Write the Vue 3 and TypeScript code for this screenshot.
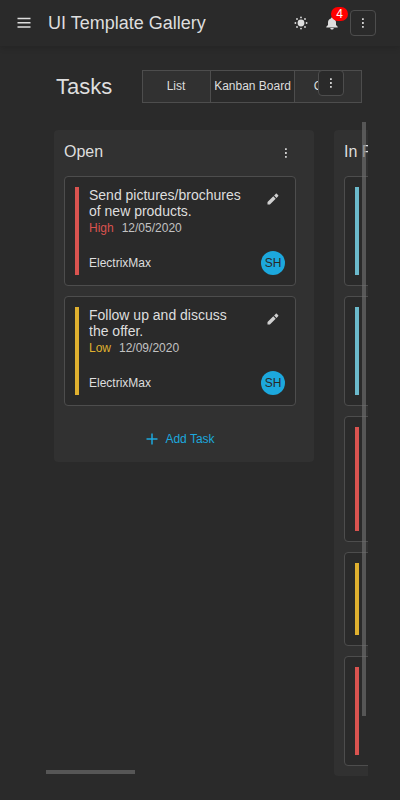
<script setup lang="ts">
interface Task {
  title: string
  priority: string
  date: string
  company: string
  initials: string
  height: number
}

interface Column {
  name: string
  tasks: Task[]
  canAdd: boolean
}

const tabs: string[] = ['List', 'Kanban Board', 'Gantt']
const activeTab = 'Kanban Board'

const blank = (priority: string, height: number): Task => ({
  title: '', priority, date: '', company: '', initials: '', height,
})

const columns: Column[] = [
  {
    name: 'Open',
    canAdd: true,
    tasks: [
      { title: 'Send pictures/brochures of new products.', priority: 'High', date: '12/05/2020', company: 'ElectrixMax', initials: 'SH', height: 110 },
      { title: 'Follow up and discuss the offer.', priority: 'Low', date: '12/09/2020', company: 'ElectrixMax', initials: 'SH', height: 110 },
    ],
  },
  {
    name: 'In Progress',
    canAdd: false,
    tasks: [blank('Normal', 110), blank('Normal', 110), blank('High', 126), blank('Low', 94), blank('High', 110)],
  },
]
</script>

<template>
  <div class="app">
    <header class="header">
      <button class="menu" aria-label="Menu">
        <svg width="14" height="12" viewBox="0 0 14 12"><path d="M.5 1.5h13M.5 5.700h13M.5 10h13" /></svg>
      </button>
      <div class="brand">UI Template Gallery</div>
      <button class="icon-button theme" aria-label="Theme">
        <svg width="14" height="14" viewBox="0 0 14 14">
          <circle cx="7" cy="7" r="3.4" />
          <g>
            <circle cx="7" cy="1.400" r=".9" /><circle cx="7" cy="12.600" r=".9" />
            <circle cx="1.400" cy="7" r=".9" /><circle cx="12.600" cy="7" r=".9" />
            <circle cx="3" cy="3" r=".9" /><circle cx="11" cy="3" r=".9" />
            <circle cx="3" cy="11" r=".9" /><circle cx="11" cy="11" r=".9" />
          </g>
        </svg>
      </button>
      <button class="icon-button bell" aria-label="Notifications">
        <svg width="12" height="13" viewBox="0 0 12 13">
          <path d="M6 .5c.7 0 1 .4 1 1C8.900 2 10 3.500 10 5.500V8l1.700 1.700v.8H.3v-.8L2 8V5.500C2 3.500 3.100 2 5 1.500c0-.6.3-1 1-1zM4.300 11h3.400c0 1-.7 1.600-1.700 1.600S4.300 12 4.300 11z" />
        </svg>
        <span class="badge">4</span>
      </button>
      <button class="more" aria-label="More">
        <svg class="dots" width="2" height="10" viewBox="0 0 2 10"><path d="M0 .2h1.800V2H0zM0 4.100h1.800v1.800H0zM0 8h1.800v1.800H0z" /></svg>
      </button>
    </header>

    <main class="page">
      <div class="toolbar">
        <h1>Tasks</h1>
        <div class="tabs">
          <div v-for="tab in tabs" :key="tab" class="tab" :class="{ active: tab === activeTab }">{{ tab }}</div>
          <button class="more overflow" aria-label="More">
            <svg class="dots" width="2" height="10" viewBox="0 0 2 10"><path d="M0 .2h1.800V2H0zM0 4.100h1.800v1.800H0zM0 8h1.800v1.800H0z" /></svg>
          </button>
        </div>
      </div>

      <div class="board">
        <section v-for="column in columns" :key="column.name" class="column">
          <div class="column-head">
            <h2>{{ column.name }}</h2>
            <svg class="dots" width="2" height="10" viewBox="0 0 2 10"><path d="M0 .2h1.800V2H0zM0 4.100h1.800v1.800H0zM0 8h1.800v1.800H0z" /></svg>
          </div>
          <article v-for="(task, i) in column.tasks" :key="i" class="card" :style="{ height: task.height + 'px' }">
            <div class="stripe" :class="task.priority.toLowerCase()"></div>
            <div v-if="task.title" class="content">
              <div class="top">
                <div class="title">{{ task.title }}</div>
                <svg class="pencil" width="12" height="12" viewBox="0 0 12 12">
                  <path d="M.5 9.100v2.400h2.400l5.800-5.800-2.400-2.400zM7.100 2.500l2.400 2.400 1.600-1.600c.4-.4.4-.8 0-1.200L9.900.9c-.4-.4-.8-.4-1.200 0z" />
                </svg>
              </div>
              <div class="meta">
                <span :class="'text-' + task.priority.toLowerCase()">{{ task.priority }}</span>
                <span>{{ task.date }}</span>
              </div>
              <div class="bottom">
                <span>{{ task.company }}</span>
                <span class="avatar">{{ task.initials }}</span>
              </div>
            </div>
          </article>
          <button v-if="column.canAdd" class="add">
            <svg width="12" height="12" viewBox="0 0 12 12"><path d="M6 .5v11M.5 6h11" /></svg>
            <span>Add Task</span>
          </button>
        </section>
        <div class="scroll-y"></div>
        <div class="scroll-x"></div>
      </div>
    </main>
  </div>
</template>

<style>
body {
  margin: 0;
  background: #2a2a2a;
}
</style>

<style scoped>
.app {
  width: 400px;
  height: 800px;
  overflow: hidden;
  background: #2a2a2a;
  color: #dedede;
  font: 12px/16px "Liberation Sans", Arial, sans-serif;
}
.app * {
  box-sizing: border-box;
}
button {
  display: flex;
  align-items: center;
  justify-content: center;
  padding: 0;
  border: 0;
  background: none;
  color: inherit;
  font: inherit;
}
svg {
  display: block;
  flex: none;
  fill: #dedede;
}
.dots {
  fill: #d0d0d0;
}
h1,
h2 {
  margin: 0;
  font-weight: 400;
}
.header {
  position: relative;
  display: flex;
  align-items: center;
  height: 46px;
  padding: 0 24px 0 16px;
  background: #2a2a2a;
  box-shadow: 0 2px 6px rgba(0, 0, 0, 0.14);
}
.menu {
  width: 16px;
  height: 16px;
}
.menu svg {
  fill: none;
  stroke: #dedede;
  stroke-width: 1.5;
}
.brand {
  flex: 1;
  margin-left: 16px;
  font-size: 18px;
  line-height: 24px;
}
.icon-button {
  width: 26px;
  height: 26px;
}
.theme {
  margin-right: 5px;
}
.bell {
  position: relative;
  margin-right: 5px;
}
.badge {
  position: absolute;
  left: 12px;
  top: -3px;
  width: 17px;
  height: 14px;
  border-radius: 7px;
  background: #f00;
  color: #fff;
  line-height: 14px;
  text-align: center;
}
.more {
  width: 26px;
  height: 26px;
  border: 1px solid #4d4d4d;
  border-radius: 4px;
  background: #2a2a2a;
}
.page {
  padding: 24px 32px 0 46px;
}
.toolbar {
  display: flex;
  align-items: center;
  justify-content: space-between;
  height: 33px;
  padding: 0 6px 0 10px;
}
h1 {
  font-size: 22px;
  line-height: 32px;
}
.tabs {
  position: relative;
  display: flex;
  width: 220px;
  height: 33px;
  border: 1px solid #4d4d4d;
}
.tab {
  flex: 0 0 67px;
  padding-right: 1px;
  line-height: 31px;
  text-align: center;
  background: #313131;
}
.tab:last-of-type {
  flex: 1;
  padding: 0 0 0 1px;
}
.tab.active {
  flex: 0 0 85px;
  padding: 0;
  border: solid #4d4d4d;
  border-width: 0 1px;
  background: #2a2a2a;
  white-space: nowrap;
}
.overflow {
  position: absolute;
  right: 17px;
  top: -1px;
}
.board {
  position: relative;
  display: flex;
  align-items: flex-start;
  gap: 20px;
  height: 654px;
  margin-top: 19px;
  padding: 8px 0 0 8px;
  overflow: hidden;
}
.column {
  display: flex;
  flex: 0 0 260px;
  flex-direction: column;
  gap: 10px;
  padding: 0 18px 10px 10px;
  border-radius: 4px;
  background: #313131;
}
.column-head {
  display: flex;
  align-items: center;
  justify-content: space-between;
  height: 36px;
  padding: 9px 9px 0 0;
}
h2 {
  margin-top: -1px;
  font-size: 16px;
  line-height: 20px;
}
.card {
  display: flex;
  flex: none;
  gap: 10px;
  padding: 10px;
  border: 1px solid #4d4d4d;
  border-radius: 4px;
  background: #2a2a2a;
}
.stripe {
  width: 4px;
}
.high {
  background: #d9534f;
}
.low {
  background: #dfb02f;
}
.normal {
  background: #6bb9cb;
}
.text-high {
  color: #d9534f;
}
.text-low {
  color: #dfb02f;
}
.content {
  display: flex;
  flex: 1;
  flex-direction: column;
}
.top {
  display: flex;
  justify-content: space-between;
}
.title {
  width: 160px;
  font-size: 14px;
  line-height: 16px;
}
.pencil {
  margin: 6px 6px 0 0;
  fill: #d0d0d0;
}
.meta {
  display: flex;
  gap: 8px;
  margin-top: 1px;
  line-height: 17px;
  color: #c2c2c2;
}
.bottom {
  display: flex;
  align-items: center;
  justify-content: space-between;
  margin-top: auto;
}
.avatar {
  width: 24px;
  height: 24px;
  border-radius: 50%;
  background: #1ca8dd;
  color: #2a2a2a;
  line-height: 24px;
  text-align: center;
}
.add {
  gap: 7px;
  height: 36px;
  margin: 5px 0 -5px;
  padding-left: 1px;
  color: #1ca8dd;
}
.add svg {
  fill: none;
  stroke: #1ca8dd;
  stroke-width: 1.5;
}
.scroll-y,
.scroll-x {
  position: absolute;
  background: rgba(110, 110, 110, 0.65);
}
.scroll-y {
  right: 2px;
  top: 0;
  width: 4px;
  height: 594px;
}
.scroll-x {
  left: 0;
  bottom: 2px;
  width: 89px;
  height: 4px;
}
</style>
